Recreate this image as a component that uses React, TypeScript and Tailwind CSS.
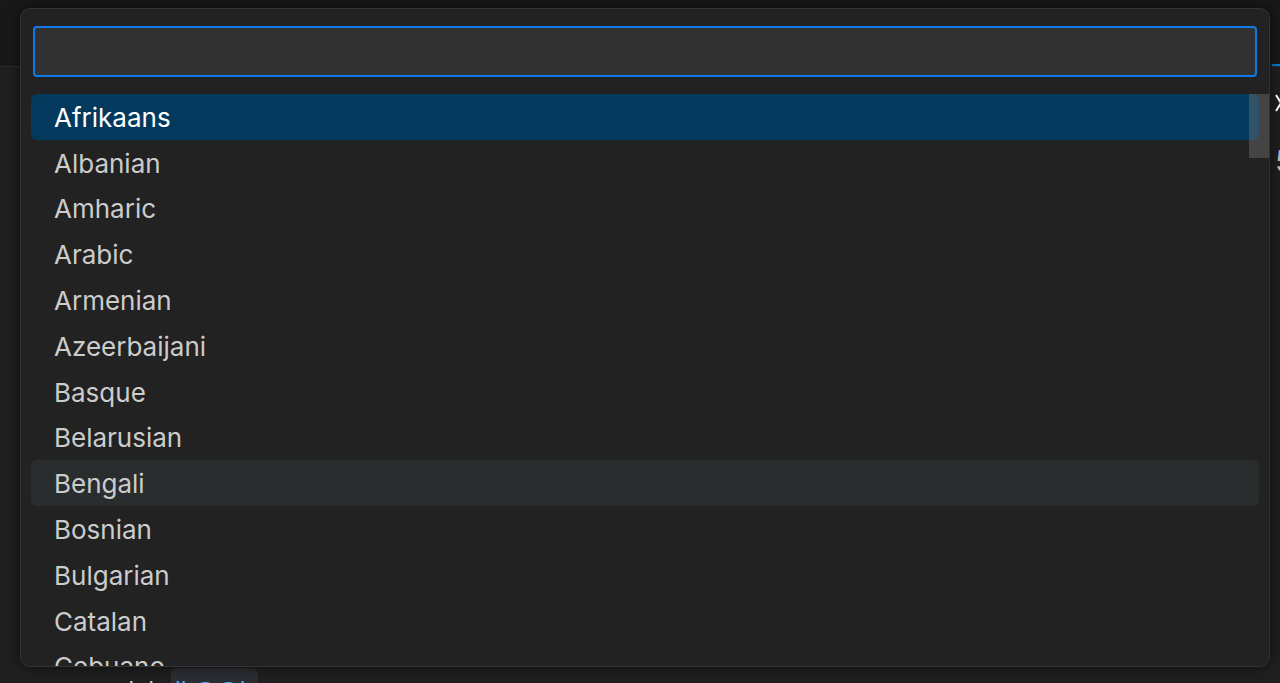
const LANGUAGES = [
  "Afrikaans",
  "Albanian",
  "Amharic",
  "Arabic",
  "Armenian",
  "Azeerbaijani",
  "Basque",
  "Belarusian",
  "Bengali",
  "Bosnian",
  "Bulgarian",
  "Catalan",
  "Cebuano",
];

const font = { fontFamily: "Inter, 'Noto Sans', sans-serif" };

export default function App() {
  return (
    <div
      className="relative w-[1280px] h-[683px] overflow-hidden bg-[#1f1f1f] text-[#cccccc]"
      style={font}
    >
      {/* Editor chrome behind the picker */}
      <div className="h-[67px] bg-[#181818] border-b border-[#2b2b2b] flex justify-end">
        <div className="w-[8px] h-full border-b-2 border-[#0078d4]" />
      </div>
      <div className="flex justify-end">
        <div className="w-[5px] flex flex-col items-start pt-[27px] overflow-hidden">
          <svg width="12" height="18" viewBox="0 0 12 18" className="shrink-0">
            <path d="M1 1 L11 17 M11 1 L1 17" stroke="#ffffff" strokeWidth="2" fill="none" />
          </svg>
          <span className="mt-[34px] text-[30px] leading-none text-[#bbbbbb]">5</span>
        </div>
      </div>

      {/* Status / hover strip under the picker */}
      <div className="absolute left-[84px] top-[668px] flex items-start gap-[6px]">
        <span className="w-[81px] overflow-hidden whitespace-nowrap pt-[11px] text-[24px] leading-none text-[#cccccc]">
          module
        </span>
        <span className="w-[87px] h-[30px] overflow-hidden whitespace-nowrap pt-[11px] px-[4px] rounded-t-[6px] bg-[#2a2d31] text-[24px] leading-none text-[#4daafc]">
          ll @@b
        </span>
      </div>

      {/* Quick pick */}
      <div className="absolute left-[20px] top-[8px] w-[1250px] h-[659px] rounded-[10px] border border-[#333333] bg-[#222222] shadow-[0_0_12px_rgba(0,0,0,0.6)] overflow-hidden flex flex-col">
        <div className="px-[12px] pt-[17px]">
          <div className="h-[51px] rounded-[4px] border-2 border-[#0f7ae5] bg-[#313131]" />
        </div>
        <div className="relative mt-[17px] px-[10px] flex flex-col min-h-0 overflow-hidden">
          {LANGUAGES.map((lang, i) => (
            <div
              key={lang}
              className={`h-[45.8px] shrink-0 flex items-center pl-[23px] pt-[1px] rounded-[6px] text-[26px] ${
                i === 0
                  ? "bg-[#04395e] text-white"
                  : i === 8
                    ? "bg-[#2a2d2e] text-[#cccccc]"
                    : "text-[#cccccc]"
              }`}
            >
              {lang}
            </div>
          ))}
          <div className="absolute right-0 top-0 w-[20px] h-[64px] bg-[rgba(121,121,121,0.4)]" />
        </div>
      </div>
    </div>
  );
}
